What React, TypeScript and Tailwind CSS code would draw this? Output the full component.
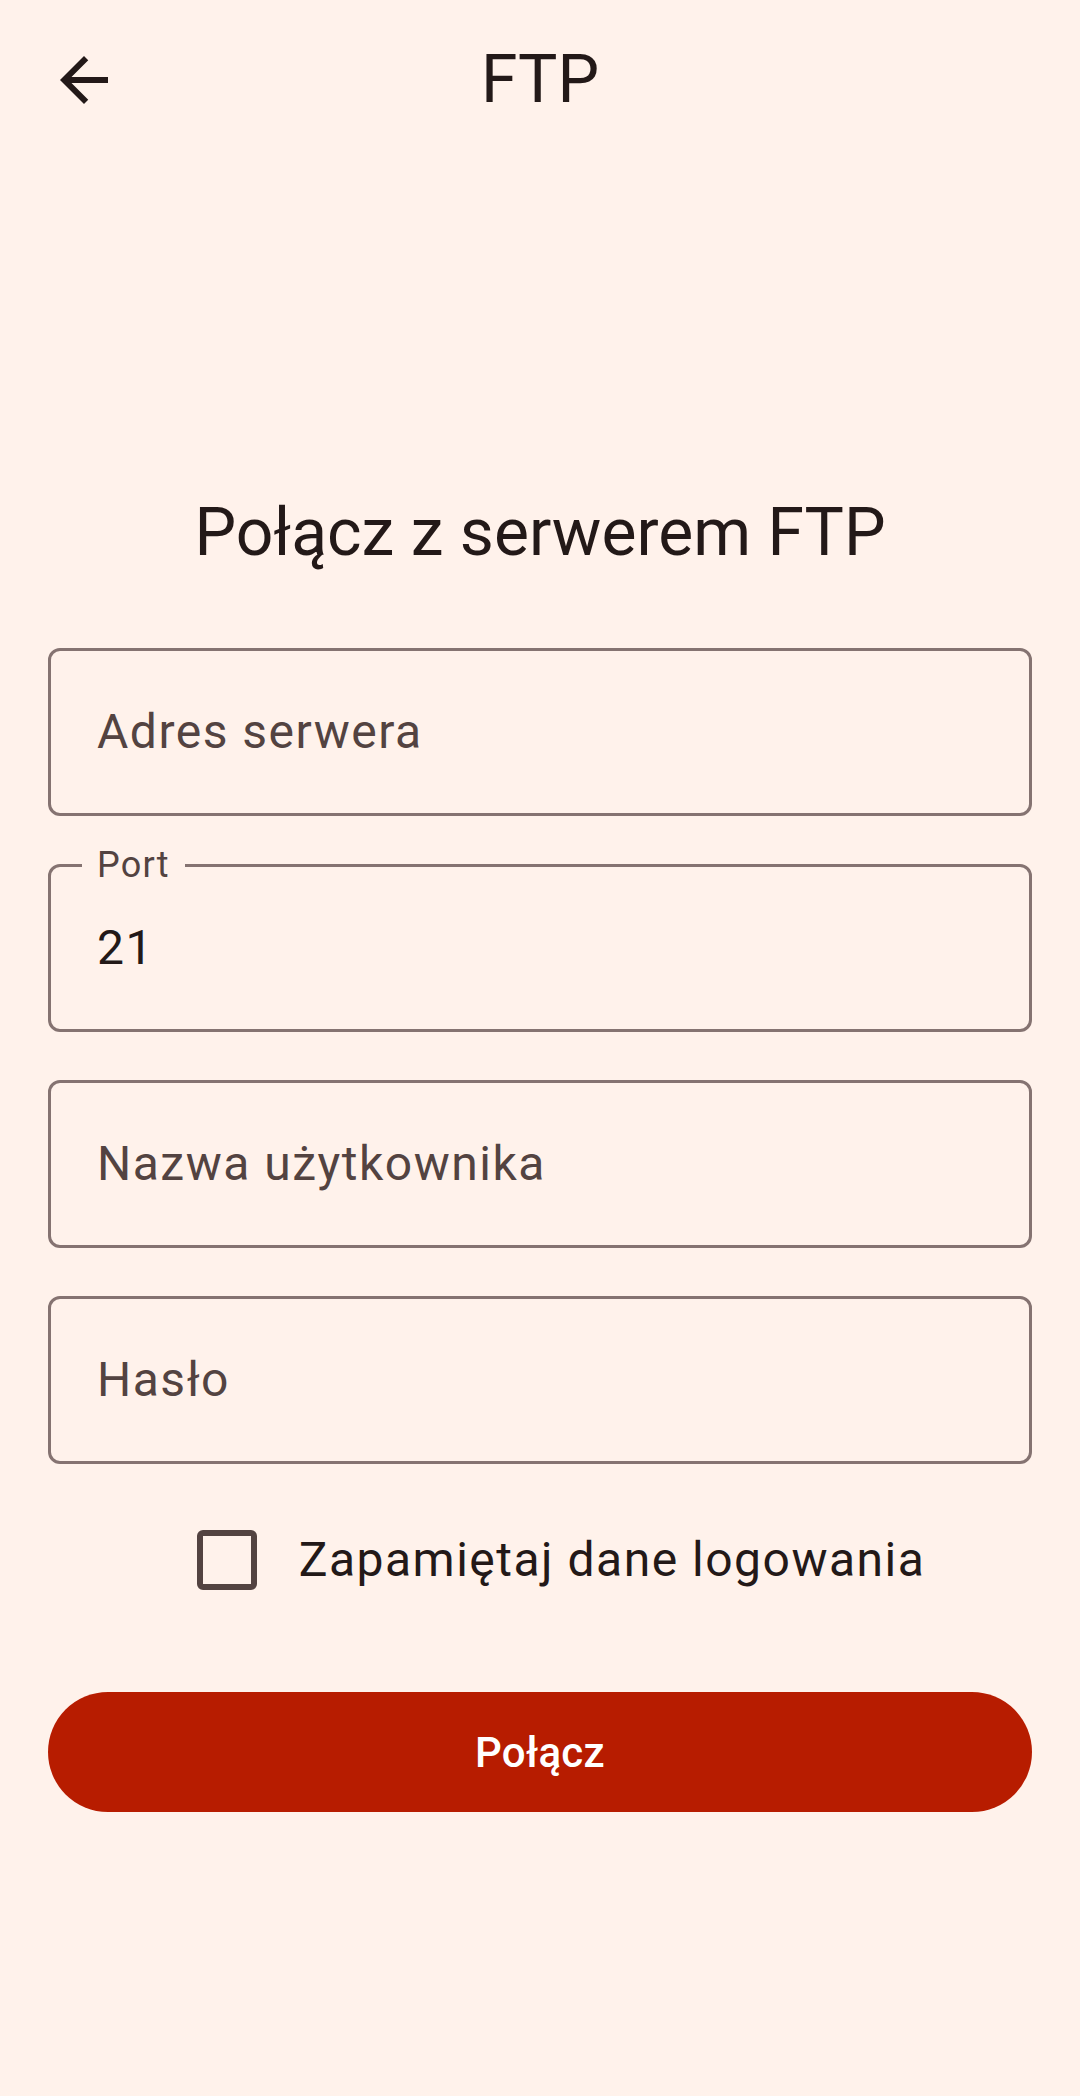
const font = { fontFamily: 'Roboto, "Noto Sans", sans-serif' }

function Field({ label, value }: { label: string; value?: string }) {
  if (value) {
    return (
      <div className="relative h-[168px] rounded-[12px] border-[3px] border-[#857371] flex items-center px-[46px]">
        <span className="absolute left-[31px] top-[-24px] bg-[#FFF2EB] px-[15px] text-[36px] leading-[44px] tracking-[1.2px] text-[#534341]">
          {label}
        </span>
        <span className="text-[48px] leading-[56px] tracking-[1.5px] text-[#231918]">{value}</span>
      </div>
    )
  }
  return (
    <div className="h-[168px] rounded-[12px] border-[3px] border-[#857371] flex items-center px-[46px]">
      <span className="text-[48px] leading-[56px] tracking-[1.5px] text-[#534341]">{label}</span>
    </div>
  )
}

export default function App() {
  return (
    <div className="min-h-[2096px] w-full bg-[#FFF2EB] text-[#231918]" style={font}>
      <header className="h-[160px] grid grid-cols-[1fr_auto_1fr] items-center px-[48px]">
        <button className="w-[72px] h-[72px] flex items-center justify-center">
          <svg viewBox="0 0 24 24" width="72" height="72" fill="#231918">
            <path d="M20 11H7.83l5.59-5.59L12 4l-8 8 8 8 1.41-1.41L7.83 13H20v-2z" />
          </svg>
        </button>
        <h1 className="text-[66px] leading-[160px]">FTP</h1>
        <div />
      </header>

      <main className="px-[48px]">
        <h2 className="mt-[329px] text-center text-[66px] leading-[88px]">Połącz z serwerem FTP</h2>

        <div className="mt-[71px] flex flex-col gap-[48px]">
          <Field label="Adres serwera" />
          <Field label="Port" value="21" />
          <Field label="Nazwa użytkownika" />
          <Field label="Hasło" />
        </div>

        <div className="mt-[24px] h-[144px] flex items-center justify-center">
          <div className="w-[144px] h-[144px] flex items-center justify-center">
            <div className="w-[60px] h-[60px] rounded-[6px] border-[6px] border-[#534341]" />
          </div>
          <span className="text-[48px] leading-[56px] tracking-[1.5px]">Zapamiętaj dane logowania</span>
        </div>

        <button className="mt-[60px] w-full h-[120px] rounded-full bg-[#B71C00] text-white text-[42px] font-medium tracking-[0.3px]">
          Połącz
        </button>
      </main>
    </div>
  )
}
